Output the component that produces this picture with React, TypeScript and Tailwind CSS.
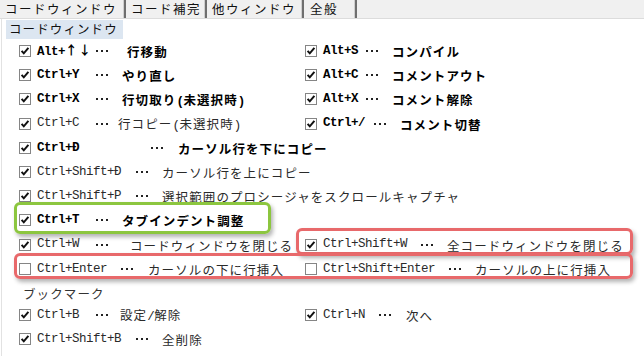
import React from "react";

type Item = { key: React.ReactNode; bold?: boolean; kw: number; dw: number; text: string; checked?: boolean };

const MONO = { fontFamily: '"Liberation Mono", "Noto Sans CJK JP", monospace' };

function Box({ checked }: { checked: boolean }) {
  return (
    <svg width="12" height="12" viewBox="0 0 12 12" className="shrink-0">
      <rect x="0.5" y="0.5" width="11" height="11" fill="#fff" stroke="#858585" />
      {checked && <path d="M2.6 5.8 L4.8 8.3 L9.4 2.9" fill="none" stroke="#111" strokeWidth="2" />}
    </svg>
  );
}

function Dots() {
  return (
    <span className="inline-flex items-center gap-[3px]">
      <span className="w-[2px] h-[2px] bg-[#222]" />
      <span className="w-[2px] h-[2px] bg-[#222]" />
      <span className="w-[2px] h-[2px] bg-[#222]" />
    </span>
  );
}

function JpText({ text }: { text: string }) {
  const parts = text.split(/([\x20-\x7e]+)/).filter((p) => p.length > 0);
  return (
    <span className="shrink-0 whitespace-nowrap leading-none">
      {parts.map((p, i) =>
        /^[\x20-\x7e]+$/.test(p) ? (
          <span key={i} className="text-[12.5px] tracking-[-0.5px]" style={MONO}>
            {p}
          </span>
        ) : (
          <span key={i} className="font-['Noto_Sans_CJK_JP',sans-serif] text-[12.5px] tracking-[1.1px]">
            {p}
          </span>
        )
      )}
    </span>
  );
}

function Cell({ item }: { item?: Item }) {
  if (!item) return <div />;
  const color = item.bold ? "text-black font-bold" : "text-[#2a2a2a]";
  return (
    <div className={`flex items-center h-full min-w-0 ${color}`}>
      <Box checked={item.checked !== false} />
      <span
        className="ml-[6px] shrink-0 inline-block whitespace-pre text-[12.5px] tracking-[-0.5px] leading-none"
        style={{ ...MONO, width: item.kw }}
      >
        {item.key}
      </span>
      <span className="shrink-0 inline-flex items-center" style={{ width: item.dw }}>
        <Dots />
      </span>
      <JpText text={item.text} />
    </div>
  );
}

const Arrows = (
  <>
    Alt+<span className="font-['Noto_Sans_CJK_JP',sans-serif] text-[12.5px] tracking-[1.1px]">↑↓</span>
  </>
);

const rows: [Item, Item?][] = [
  [
    { key: Arrows, bold: true, kw: 59, dw: 31, text: "行移動" },
    { key: "Alt+S", bold: true, kw: 43, dw: 26, text: "コンパイル" },
  ],
  [
    { key: "Ctrl+Y", bold: true, kw: 59, dw: 26, text: "やり直し" },
    { key: "Alt+C", bold: true, kw: 43, dw: 26, text: "コメントアウト" },
  ],
  [
    { key: "Ctrl+X", bold: true, kw: 59, dw: 26, text: "行切取り(未選択時)" },
    { key: "Alt+X", bold: true, kw: 43, dw: 26, text: "コメント解除" },
  ],
  [
    { key: "Ctrl+C", kw: 59, dw: 22, text: "行コピー(未選択時)" },
    { key: "Ctrl+/", bold: true, kw: 51, dw: 26, text: "コメント切替" },
  ],
  [{ key: "Ctrl+Ð", bold: true, kw: 114, dw: 27, text: "カーソル行を下にコピー" }],
  [{ key: "Ctrl+Shift+Ð", kw: 99, dw: 26, text: "カーソル行を上にコピー" }],
  [{ key: "Ctrl+Shift+P", kw: 99, dw: 26, text: "選択範囲のプロシージャをスクロールキャプチャ" }],
  [{ key: "Ctrl+T", bold: true, kw: 59, dw: 26, text: "タブインデント調整" }],
  [
    { key: "Ctrl+W", kw: 59, dw: 34, text: "コードウィンドウを閉じる" },
    { key: "Ctrl+Shift+W", kw: 98, dw: 26, text: "全コードウィンドウを閉じる" },
  ],
  [
    { key: "Ctrl+Enter", kw: 84, dw: 27, text: "カーソルの下に行挿入", checked: false },
    { key: "Ctrl+Shift+Enter", kw: 126, dw: 26, text: "カーソルの上に行挿入", checked: false },
  ],
];

const bookmarkRows: [Item, Item?][] = [
  [
    { key: "Ctrl+B", kw: 59, dw: 24, text: "設定/解除" },
    { key: "Ctrl+N", kw: 56, dw: 27, text: "次へ" },
  ],
  [{ key: "Ctrl+Shift+B", kw: 99, dw: 26, text: "全削除" }],
];

function Row({ r, h }: { r: [Item, Item?]; h: string }) {
  return (
    <div className={`grid grid-cols-[286px_1fr] ${h}`}>
      <Cell item={r[0]} />
      <Cell item={r[1]} />
    </div>
  );
}

export default function App() {
  const jp = "font-['Noto_Sans_CJK_JP',sans-serif] text-[12.5px] tracking-[1.1px] leading-none";
  return (
    <div className="relative w-[644px] h-[356px] bg-white overflow-hidden">
      {/* tab bar */}
      <div className="flex h-[19px] bg-[#f0f0f0] border-b border-[#dcdcdc] text-[#111] font-['Noto_Sans_CJK_JP',sans-serif] text-[12.5px] tracking-[1.5px] leading-none">
        <div className="w-[123px] pl-[5px] flex items-center">コードウィンドウ</div>
        <div className="w-[3px] border-l border-[#cfcfcf] bg-[#6f6f6f]" />
        <div className="w-[78px] pl-[5px] flex items-center">コード補完</div>
        <div className="w-[3px] border-l border-[#cfcfcf] bg-[#6f6f6f]" />
        <div className="w-[94px] pl-[5px] flex items-center">他ウィンドウ</div>
        <div className="w-[3px] border-l border-[#cfcfcf] bg-[#6f6f6f]" />
        <div className="w-[50px] pl-[6px] flex items-center">全般</div>
        <div className="w-[3px] border-l border-[#cfcfcf] bg-[#6f6f6f]" />
      </div>
      {/* content */}
      <div className="border-l border-[#e2e2e2] ml-[1px] h-[337px]">
        <div className="pt-[1px] pl-[4px]">
          <div className={`w-[117px] h-[19px] bg-[#dce6f1] pl-[3px] flex items-center text-[#111] ${jp}`}>
            コードウィンドウ
          </div>
        </div>
        <div className="pl-[17px]">
          {rows.map((r, i) => (
            <Row key={i} r={r} h="h-[24.2px]" />
          ))}
          <div className={`h-[22px] pt-[7px] pl-[4px] text-[#333] ${jp}`}>ブックマーク</div>
          {bookmarkRows.map((r, i) => (
            <Row key={i} r={r} h="h-[24px]" />
          ))}
        </div>
      </div>
      {/* annotation highlights */}
      <div className="absolute left-[14px] top-[202px] w-[257px] h-[32px] rounded-[6px] border-[3px] border-[#8cc63f] shadow-[2px_3px_4px_rgba(0,0,0,0.3)]" />
      <div className="absolute left-[296px] top-[228px] w-[337px] h-[27px] rounded-[6px] border-[3px] border-[#e8696b] shadow-[2px_3px_4px_rgba(0,0,0,0.3)]" />
      <div className="absolute left-[14px] top-[253px] w-[619px] h-[26px] rounded-[6px] border-[3px] border-[#e8696b] shadow-[2px_3px_4px_rgba(0,0,0,0.3)]" />
    </div>
  );
}
